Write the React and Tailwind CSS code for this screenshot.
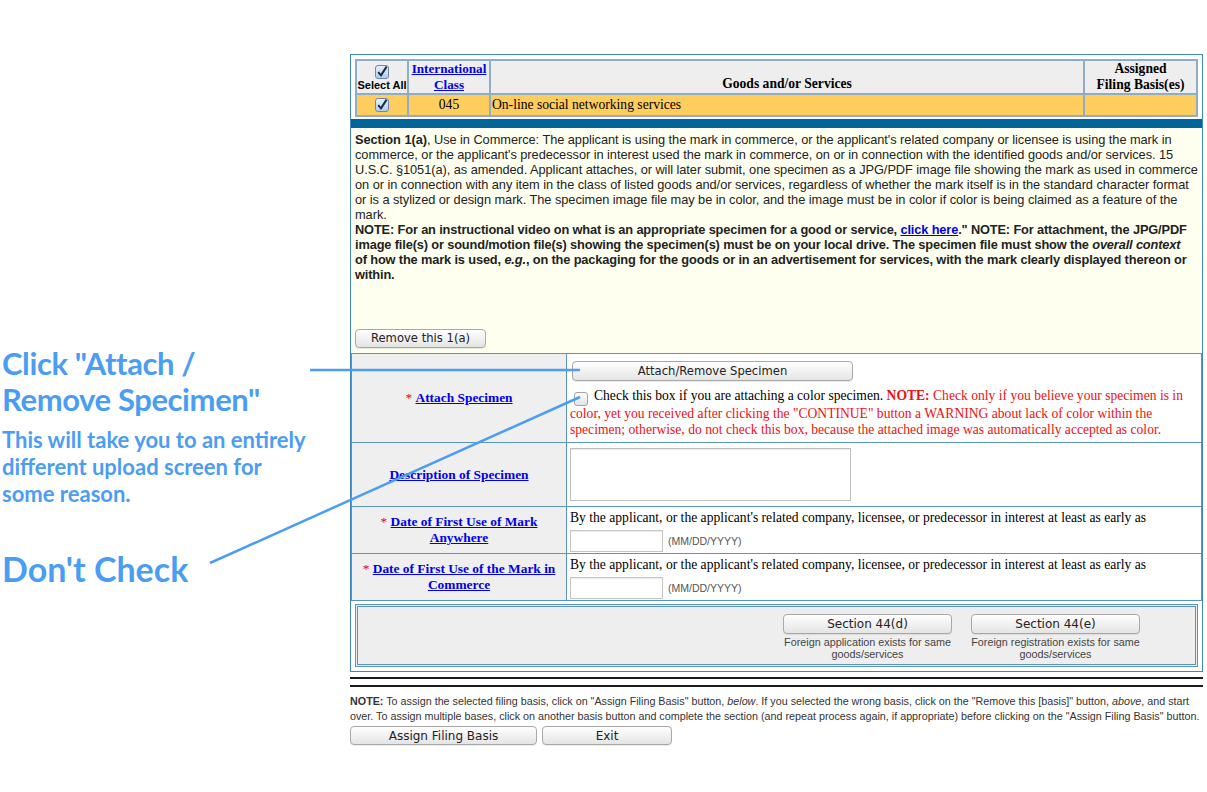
const serif = "font-['Liberation_Serif','Times_New_Roman',serif]";
const sans = "font-['Liberation_Sans',Arial,sans-serif]";
const btn =
  "shrink-0 rounded-[4px] border border-[#a8a8a8] bg-linear-to-b from-white to-[#e4e4e4] leading-none text-[#222] font-['DejaVu_Sans',sans-serif] shadow-[0_1px_0_rgba(0,0,0,0.08)]";
const link = "text-[#0000ee] underline font-bold";
const tight = "tracking-[-0.14px]";

const sectionLines = [
  <>
    <b>Section 1(a)</b>, Use in Commerce: The applicant is using the mark in commerce, or the applicant's related company
    or licensee is using the mark in
  </>,
  "commerce, or the applicant's predecessor in interest used the mark in commerce, on or in connection with the identified goods and/or services. 15",
  "U.S.C. §1051(a), as amended. Applicant attaches, or will later submit, one specimen as a JPG/PDF image file showing the mark as used in commerce",
  "on or in connection with any item in the class of listed goods and/or services, regardless of whether the mark itself is in the standard character format",
  "or is a stylized or design mark. The specimen image file may be in color, and the image must be in color if color is being claimed as a feature of the",
  "mark.",
  <b className={tight}>
    NOTE: For an instructional video on what is an appropriate specimen for a good or service,{" "}
    <a className="text-[#0000ee] underline">click here</a>." NOTE: For attachment, the JPG/PDF
  </b>,
  <b className={tight}>
    image file(s) or sound/motion file(s) showing the specimen(s) must be on your local drive. The specimen file must show
    the <i>overall context</i>
  </b>,
  <b className={tight}>
    of how the mark is used, <i>e.g.</i>, on the packaging for the goods or in an advertisement for services, with the mark
    clearly displayed thereon or
  </b>,
  <b className={tight}>within.</b>,
];

function CheckBox({ checked }) {
  const id = checked ? "cbOn" : "cbOff";
  return (
    <svg width="14" height="14" viewBox="0 0 14 14" className="inline-block">
      <defs>
        <linearGradient id={id} x1="0" y1="0" x2="0" y2="1">
          <stop offset="0" stopColor={checked ? "#e8f2fd" : "#ffffff"} />
          <stop offset="1" stopColor={checked ? "#a9cdf2" : "#e3e3e3"} />
        </linearGradient>
      </defs>
      <rect
        x="0.5"
        y="0.5"
        width="13"
        height="13"
        rx="2.5"
        fill={`url(#${id})`}
        stroke={checked ? "#6c88ad" : "#a3a3a3"}
      />
      {checked && <path d="M3.2 7.2 L6 10.4 L11.6 1.6" stroke="#1d2a40" strokeWidth="2" fill="none" />}
    </svg>
  );
}

function Annotations() {
  return (
    <div className="w-[350px] shrink-0 pl-[2px] font-['Lato',sans-serif] font-bold text-[#4b9df4]">
      <div className="mt-[345px] text-[31px] leading-[36px] tracking-[-0.4px]">
        Click "Attach /
        <br />
        Remove Specimen"
      </div>
      <div className="mt-[9px] text-[22px] leading-[27px]">
        This will take you to an entirely
        <br />
        different upload screen for
        <br />
        some reason.
      </div>
      <div className="mt-[44px] text-[34px] leading-[36px]">Don't Check</div>
    </div>
  );
}

function DateRow({ label1, label2 }) {
  return (
    <tr className="h-[47px]">
      <td className={`border border-[#5a94c2] bg-[#efefef] text-center align-middle text-[13.4px] leading-[16px] ${serif}`}>
        <span className="text-[#ee0000]">* </span>
        <a className={link}>{label1}</a>
        <br />
        <a className={link}>{label2}</a>
      </td>
      <td className={`border border-[#5a94c2] bg-white px-[3px] align-top pt-[3px] text-[13.6px] leading-[16px] ${serif}`}>
        By the applicant, or the applicant's related company, licensee, or predecessor in interest at least as early as
        <div className="mt-[4px] flex items-center gap-[5px]">
          <div className="h-[22px] w-[93px] border border-[#c4c4c4] bg-white shadow-[inset_0_1px_1px_rgba(0,0,0,0.08)]" />
          <span className={`text-[10.5px] text-[#555] ${sans}`}>(MM/DD/YYYY)</span>
        </div>
      </td>
    </tr>
  );
}

function Form() {
  return (
    <div className="w-[853px] shrink-0 pt-[54px]">
      <div className="border border-[#3f88bd]">
        <div className="px-[4px] pt-[4px] pb-[2px]">
          <table className={`w-full border-collapse border-2 border-[#8eadc6] ${serif} text-[13.6px]`}>
            <tbody>
              <tr className="h-[34px] bg-[#eeeeee]">
                <td className="w-[52px] border-2 border-[#8eadc6] text-center align-bottom pb-[1px]">
                  <div className="flex justify-center">
                    <CheckBox checked />
                  </div>
                  <div className={`text-[11px] font-bold leading-[13px] ${sans}`}>Select All</div>
                </td>
                <td className="w-[82px] border-2 border-[#8eadc6] text-center align-bottom text-[13.2px] leading-[16px]">
                  <a className={link}>International</a>
                  <br />
                  <a className={link}>Class</a>
                </td>
                <td className="border-2 border-[#8eadc6] text-center align-bottom font-bold leading-[16px] pb-[1px]">
                  Goods and/or Services
                </td>
                <td className="w-[113px] border-2 border-[#8eadc6] text-center align-bottom font-bold leading-[16px]">
                  Assigned
                  <br />
                  Filing Basis(es)
                </td>
              </tr>
              <tr className="h-[22px] bg-[#ffcc5e]">
                <td className="border-2 border-[#8eadc6] text-center align-middle">
                  <div className="flex justify-center">
                    <CheckBox checked />
                  </div>
                </td>
                <td className="border-2 border-[#8eadc6] text-center">045</td>
                <td className="border-2 border-[#8eadc6] px-[1px]">On-line social networking services</td>
                <td className="border-2 border-[#8eadc6]" />
              </tr>
            </tbody>
          </table>
        </div>
        <div className="h-[9px] bg-[#006699]" />
        <div className={`flex h-[225px] flex-col justify-between bg-[#fffff0] px-[4px] pt-[4px] pb-[5px] text-[12.8px] leading-[15px] tracking-[-0.05px] text-[#222] ${sans}`}>
          <div>
            {sectionLines.map((line, i) => (
              <div key={i} className="whitespace-nowrap">
                {line}
              </div>
            ))}
          </div>
          <div>
            <button className={`${btn} h-[19px] w-[131px] text-[11.6px] tracking-normal`}>Remove this 1(a)</button>
          </div>
        </div>
        <table className="w-full border-collapse">
          <tbody>
            <tr className="h-[88px]">
              <td className={`w-[215px] border border-[#5a94c2] bg-[#efefef] text-center text-[13.4px] ${serif}`}>
                <span className="text-[#ee0000]">* </span>
                <a className={link}>Attach Specimen</a>
              </td>
              <td className={`border border-[#5a94c2] bg-white px-[3px] pt-[7px] pb-[4px] align-top text-[13.6px] leading-[16px] ${serif}`}>
                <div className="pl-[2px]">
                  <button className={`${btn} h-[20px] w-[281px] text-[11.6px]`}>Attach/Remove Specimen</button>
                </div>
                <div className="mt-[7px] whitespace-nowrap">
                  <div>
                    <span className="mr-[6px] ml-[4px] inline-block align-[-2px]">
                      <CheckBox />
                    </span>
                    Check this box if you are attaching a color specimen.{" "}
                    <span className="text-[#ee1111]">
                      <b>NOTE:</b> Check only if you believe your specimen is in
                    </span>
                  </div>
                  <div className="text-[#ee1111]">
                    color, yet you received after clicking the "CONTINUE" button a WARNING about lack of color within the
                  </div>
                  <div className="text-[#ee1111]">
                    specimen; otherwise, do not check this box, because the attached image was automatically accepted as
                    color.
                  </div>
                </div>
              </td>
            </tr>
            <tr className="h-[64px]">
              <td className={`border border-[#5a94c2] bg-[#efefef] text-center text-[13.4px] ${serif}`}>
                <a className={link}>Description of Specimen</a>
              </td>
              <td className="border border-[#5a94c2] bg-white px-[3px] align-middle">
                <div className="h-[53px] w-[281px] border border-[#bdbdbd] bg-white shadow-[inset_0_1px_1px_rgba(0,0,0,0.08)]" />
              </td>
            </tr>
            <DateRow label1="Date of First Use of Mark" label2="Anywhere" />
            <DateRow label1="Date of First Use of the Mark in" label2="Commerce" />
          </tbody>
        </table>
        <div className="m-[4px] mt-[3px] flex h-[63px] justify-end gap-[19px] border-[3px] border-double border-[#5a94c2] bg-[#eeeeee] pr-[55px] pt-[7px]">
          {[
            ["Section 44(d)", "Foreign application exists for same"],
            ["Section 44(e)", "Foreign registration exists for same"],
          ].map(([label, cap]) => (
            <div key={label} className="flex w-[169px] flex-col items-center">
              <button className={`${btn} h-[20px] w-[169px] text-[12px]`}>{label}</button>
              <div className={`mt-[2px] whitespace-nowrap text-center text-[10.8px] leading-[12px] text-[#444] ${sans}`}>
                {cap}
                <br />
                goods/services
              </div>
            </div>
          ))}
        </div>
      </div>
      <div className="mt-[5px] h-[10px] border-y-2 border-[#1a1a1a]" />
      <div className={`mt-[7px] whitespace-nowrap text-[10.75px] leading-[15px] text-[#333] ${sans}`}>
        <div>
          <b>NOTE:</b> To assign the selected filing basis, click on "Assign Filing Basis" button, <i>below</i>. If you
          selected the wrong basis, click on the "Remove this [basis]" button, <i>above</i>, and start
        </div>
        <div>
          over. To assign multiple bases, click on another basis button and complete the section (and repeat process
          again, if appropriate) before clicking on the "Assign Filing Basis" button.
        </div>
      </div>
      <div className="mt-[2px] flex gap-[5px]">
        <button className={`${btn} h-[19px] w-[187px] text-[12px]`}>Assign Filing Basis</button>
        <button className={`${btn} h-[19px] w-[130px] text-[12px]`}>Exit</button>
      </div>
    </div>
  );
}

export default function App() {
  return (
    <div className="relative h-[792px] w-[1207px] overflow-hidden bg-white">
      <div className="flex">
        <Annotations />
        <Form />
      </div>
      <svg className="pointer-events-none absolute left-0 top-0" width="1207" height="792">
        <line x1="310" y1="370" x2="580" y2="370" stroke="#4b9df4" strokeWidth="2.5" />
        <line x1="210" y1="563" x2="580" y2="397" stroke="#4b9df4" strokeWidth="2.5" />
      </svg>
    </div>
  );
}
